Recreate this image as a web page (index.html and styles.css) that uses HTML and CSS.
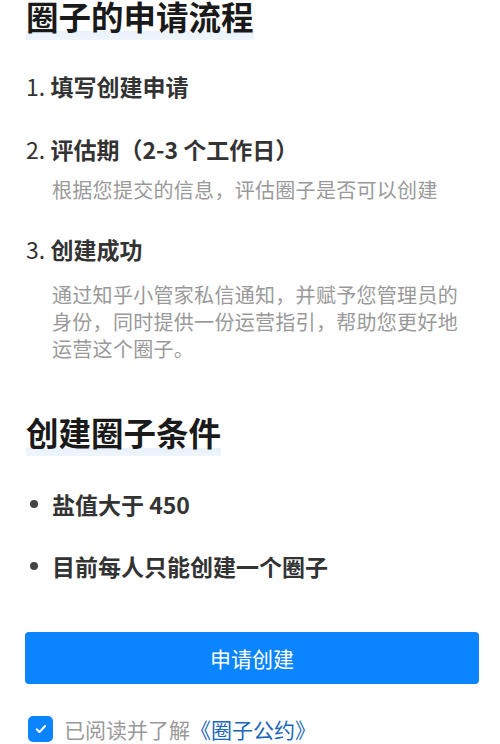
FILE: index.html
```html
<!DOCTYPE html>
<html lang="zh-CN">
<head>
<meta charset="utf-8">
<title>圈子的申请流程</title>
<link rel="stylesheet" href="styles.css">
</head>
<body>
<main class="page">
  <h1 class="heading heading-first">圈子的申请流程</h1>
  <ol class="steps">
    <li class="step step-1">
      <div class="step-title"><span class="num">1.</span> 填写创建申请</div>
    </li>
    <li class="step step-2">
      <div class="step-title"><span class="num">2.</span> 评估期（2-3 个工作日）</div>
      <p class="step-desc desc-short">根据您提交的信息，评估圈子是否可以创建</p>
    </li>
    <li class="step step-3">
      <div class="step-title"><span class="num">3.</span> 创建成功</div>
      <p class="step-desc desc-long">通过知乎小管家私信通知，并赋予您管理员的身份，同时提供一份运营指引，帮助您更好地运营这个圈子。</p>
    </li>
  </ol>
  <h1 class="heading heading-second">创建圈子条件</h1>
  <ul class="conditions">
    <li class="cond cond-1">盐值大于 450</li>
    <li class="cond cond-2">目前每人只能创建一个圈子</li>
  </ul>
  <button class="apply-btn" type="button">申请创建</button>
  <label class="agree">
    <span class="checkbox">
      <svg viewBox="0 0 24 24" width="16" height="16" aria-hidden="true"><path d="M5.5 12.5l4.2 4 8.5-9" fill="none" stroke="#fff" stroke-width="3" stroke-linecap="round" stroke-linejoin="round"/></svg>
    </span>
    <span class="agree-text">已阅读并了解<a class="agree-link" href="#">《圈子公约》</a></span>
  </label>
</main>
</body>
</html>
```

FILE: styles.css
```css
html, body {
  margin: 0;
  padding: 0;
  background: #fff;
}
body {
  font-family: "Noto Sans CJK SC", "Noto Sans", sans-serif;
  color: #1a1a1a;
  width: 500px;
  height: 744px;
  overflow: hidden;
}
.page {
  padding: 0 21px 0 26px;
}
.heading {
  display: inline-block;
  margin: 0;
  font-size: 32.5px;
  font-weight: 700;
  line-height: 32px;
  padding-bottom: 8px;
  color: #1a1a1a;
  background: linear-gradient(to bottom, transparent 31px, #e9f2fb 31px, #eef5fc 40px);
}
.heading-second {
  margin-top: 54px;
  background: linear-gradient(to bottom, transparent 32px, #e9f2fb 32px, #eef5fc 40px);
}
.steps {
  list-style: none;
  margin: 31px 0 0;
  padding: 0;
}
.step + .step {
  margin-top: 33px;
}
.step-3 {
  margin-top: 31px !important;
}
.step-title {
  font-size: 23px;
  line-height: 30px;
  font-weight: 700;
  color: #333;
}
.num {
  font-weight: 400;
  color: #333;
}
.step-desc {
  margin: 0;
  padding-left: 26px;
  font-size: 20px;
  line-height: 27px;
  color: #999;
  letter-spacing: 0.3px;
}
.desc-short {
  margin-top: 12px;
}
.desc-long {
  margin-top: 17px;
  padding-right: 14px;
}
.conditions {
  list-style: none;
  margin: 33px 0 0;
  padding: 0;
}
.cond {
  display: flex;
  align-items: center;
  font-size: 23px;
  line-height: 30px;
  font-weight: 700;
  color: #333;
}
.cond::before {
  content: "";
  width: 8px;
  height: 8px;
  border-radius: 50%;
  background: #444;
  margin: 0 14px 0 4px;
  flex: none;
}
.cond + .cond {
  margin-top: 32px;
}
.apply-btn {
  display: block;
  width: 454px;
  height: 52px;
  margin: 51px 0 0 -1px;
  border: none;
  border-radius: 4px;
  background: #0a84ff;
  color: #fff;
  font-family: inherit;
  font-size: 21px;
  font-weight: 400;
  cursor: pointer;
}
.agree {
  display: flex;
  align-items: center;
  margin-top: 31px;
  height: 28px;
}
.checkbox {
  width: 25px;
  height: 26px;
  border-radius: 5px;
  background: #0a84ff;
  display: flex;
  align-items: center;
  justify-content: center;
  margin-left: 2px;
  flex: none;
}
.agree-text {
  margin-left: 11px;
  font-size: 21px;
  line-height: 28px;
  color: #999;
}
.agree-link {
  color: #1a66b8;
  text-decoration: none;
}
```
